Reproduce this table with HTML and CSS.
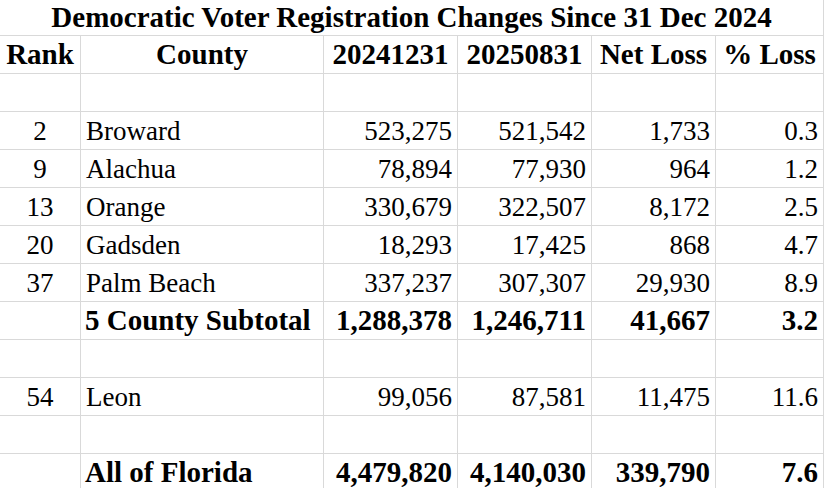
FILE: index.html
```html
<!DOCTYPE html>
<html lang="en">
<head>
<meta charset="utf-8">
<title>Democratic Voter Registration Changes Since 31 Dec 2024</title>
<link rel="stylesheet" href="styles.css">
</head>
<body>
<div class="sheet">
  <div class="cell title">Democratic Voter Registration Changes Since 31 Dec 2024</div>

  <div class="cell hd">Rank</div>
  <div class="cell hd">County</div>
  <div class="cell hd">20241231</div>
  <div class="cell hd">20250831</div>
  <div class="cell hd">Net Loss</div>
  <div class="cell hd">% Loss</div>

  <div class="cell"></div><div class="cell"></div><div class="cell"></div><div class="cell"></div><div class="cell"></div><div class="cell"></div>

  <div class="cell rank">2</div>
  <div class="cell name">Broward</div>
  <div class="cell num">523,275</div>
  <div class="cell num">521,542</div>
  <div class="cell num">1,733</div>
  <div class="cell num">0.3</div>

  <div class="cell rank">9</div>
  <div class="cell name">Alachua</div>
  <div class="cell num">78,894</div>
  <div class="cell num">77,930</div>
  <div class="cell num">964</div>
  <div class="cell num">1.2</div>

  <div class="cell rank">13</div>
  <div class="cell name">Orange</div>
  <div class="cell num">330,679</div>
  <div class="cell num">322,507</div>
  <div class="cell num">8,172</div>
  <div class="cell num">2.5</div>

  <div class="cell rank">20</div>
  <div class="cell name">Gadsden</div>
  <div class="cell num">18,293</div>
  <div class="cell num">17,425</div>
  <div class="cell num">868</div>
  <div class="cell num">4.7</div>

  <div class="cell rank">37</div>
  <div class="cell name">Palm Beach</div>
  <div class="cell num">337,237</div>
  <div class="cell num">307,307</div>
  <div class="cell num">29,930</div>
  <div class="cell num">8.9</div>

  <div class="cell rank"></div>
  <div class="cell name bold">5 County Subtotal</div>
  <div class="cell num bold">1,288,378</div>
  <div class="cell num bold">1,246,711</div>
  <div class="cell num bold">41,667</div>
  <div class="cell num bold">3.2</div>

  <div class="cell"></div><div class="cell"></div><div class="cell"></div><div class="cell"></div><div class="cell"></div><div class="cell"></div>

  <div class="cell rank">54</div>
  <div class="cell name">Leon</div>
  <div class="cell num">99,056</div>
  <div class="cell num">87,581</div>
  <div class="cell num">11,475</div>
  <div class="cell num">11.6</div>

  <div class="cell"></div><div class="cell"></div><div class="cell"></div><div class="cell"></div><div class="cell"></div><div class="cell"></div>

  <div class="cell rank"></div>
  <div class="cell name bold">All of Florida</div>
  <div class="cell num bold">4,479,820</div>
  <div class="cell num bold">4,140,030</div>
  <div class="cell num bold">339,790</div>
  <div class="cell num bold">7.6</div>
</div>
</body>
</html>
```
FILE: styles.css
```css
html, body {
  margin: 0;
  padding: 0;
  background: #ffffff;
}

body {
  width: 825px;
  height: 488px;
  overflow: hidden;
  font-family: "Liberation Serif", "Times New Roman", serif;
  color: #000000;
}

.sheet {
  display: grid;
  grid-template-columns: 81px 243px 134px 134px 124px 108px;
  grid-template-rows: 36px repeat(12, 38px);
}

.cell {
  box-sizing: border-box;
  border-right: 1px solid #d9d9d9;
  border-bottom: 1px solid #d9d9d9;
  display: flex;
  align-items: flex-end;
  font-size: 27px;
  line-height: 27px;
  padding-bottom: 4px;
  white-space: nowrap;
}

.title {
  grid-column: 1 / span 6;
  justify-content: center;
  font-weight: bold;
  font-size: 29px;
  line-height: 29px;
  padding-bottom: 3px;
}

.hd {
  justify-content: center;
  font-weight: bold;
  font-size: 29px;
  line-height: 29px;
  padding-bottom: 4px;
}

.rank {
  justify-content: center;
}

.name {
  justify-content: flex-start;
  padding-left: 5px;
}

.num {
  justify-content: flex-end;
  padding-right: 5px;
}

.bold {
  font-weight: bold;
  font-size: 29px;
  line-height: 29px;
}

.name.bold {
  padding-left: 4px;
}
```
